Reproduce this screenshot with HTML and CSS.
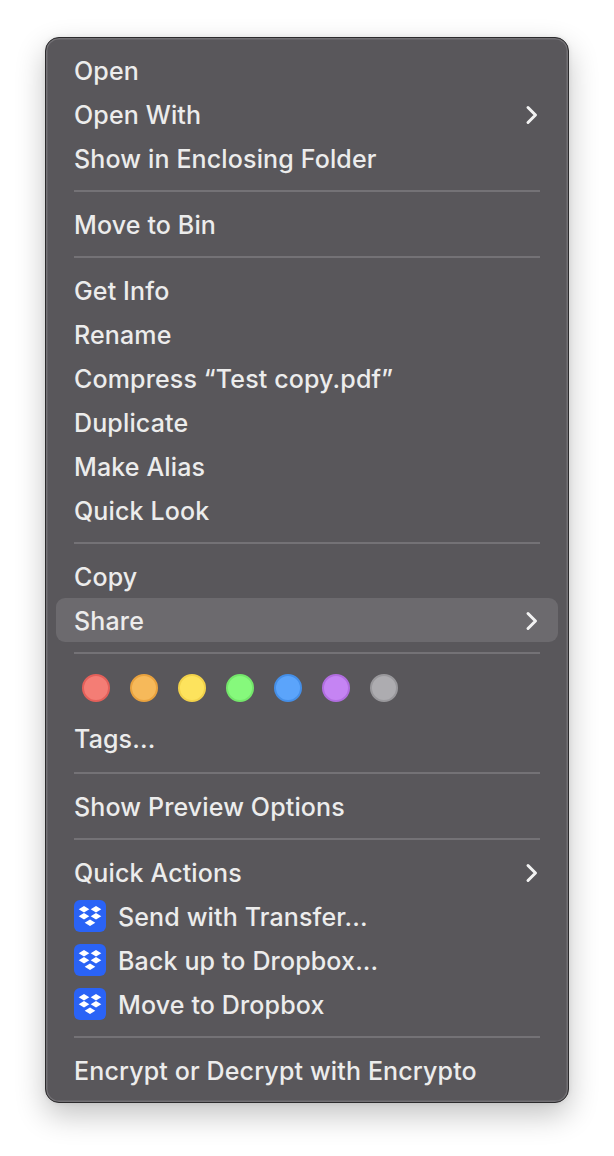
FILE: index.html
```html
<!DOCTYPE html>
<html lang="en">
<head>
<meta charset="utf-8">
<title>Context menu</title>
<link rel="stylesheet" href="styles.css">
</head>
<body>
<svg class="defs" width="0" height="0" aria-hidden="true">
  <symbol id="chev" viewBox="0 0 14 20"><path d="M3 2.5 L10.5 10 L3 17.5" fill="none" stroke="currentColor" stroke-width="3" stroke-linecap="round" stroke-linejoin="round"/></symbol>
  <symbol id="dbx" viewBox="0 0 32 32"><rect width="32" height="32" rx="6" fill="#2a63f6"/><path fill="#fff" d="M4.700 9.300 10 6l5.300 3.300L10 12.600zM16.700 9.300 22 6l5.300 3.300L22 12.600zM4.700 16.300 10 13l5.300 3.300L10 19.600zM16.700 16.300 22 13l5.300 3.300L22 19.600zM10.700 22.800 16 19.500l5.300 3.300L16 26.100z"/></symbol>
</svg>
<div class="menu">
  <div class="row">Open</div>
  <div class="row sub">Open With<svg class="chev"><use href="#chev"/></svg></div>
  <div class="row">Show in Enclosing Folder</div>
  <div class="sep"></div>
  <div class="row">Move to Bin</div>
  <div class="sep"></div>
  <div class="row">Get Info</div>
  <div class="row">Rename</div>
  <div class="row">Compress “Test copy.pdf”</div>
  <div class="row">Duplicate</div>
  <div class="row">Make Alias</div>
  <div class="row">Quick Look</div>
  <div class="sep"></div>
  <div class="row">Copy</div>
  <div class="row sub active">Share<svg class="chev"><use href="#chev"/></svg></div>
  <div class="sep"></div>
  <div class="tags">
    <span class="dot red"></span>
    <span class="dot orange"></span>
    <span class="dot yellow"></span>
    <span class="dot green"></span>
    <span class="dot blue"></span>
    <span class="dot purple"></span>
    <span class="dot grey"></span>
  </div>
  <div class="row tags-label">Tags...</div>
  <div class="sep"></div>
  <div class="row">Show Preview Options</div>
  <div class="sep"></div>
  <div class="row sub">Quick Actions<svg class="chev"><use href="#chev"/></svg></div>
  <div class="row"><svg class="dbx"><use href="#dbx"/></svg>Send with Transfer...</div>
  <div class="row"><svg class="dbx"><use href="#dbx"/></svg>Back up to Dropbox...</div>
  <div class="row"><svg class="dbx"><use href="#dbx"/></svg>Move to Dropbox</div>
  <div class="sep"></div>
  <div class="row">Encrypt or Decrypt with Encrypto</div>
</div>
</body>
</html>
```
FILE: styles.css
```css
html, body {
  margin: 0;
  background: #ffffff;
}
body {
  width: 614px;
  height: 1156px;
  overflow: hidden;
  padding: 37px 0 0 45px;
  box-sizing: border-box;
}
.defs {
  position: absolute;
}
.menu {
  box-sizing: border-box;
  display: flex;
  flex-direction: column;
  width: 524px;
  height: 1066px;
  padding: 11px 10px 10px;
  border: 1px solid #2c2b2d;
  border-radius: 14px;
  background: #59575b;
  box-shadow: inset 0 0 0 1.500px #737175, 0 12px 30px rgba(0, 0, 0, 0.24), 0 0 5px rgba(0, 0, 0, 0.08);
  color: #ececec;
  font-family: Inter, "Liberation Sans", sans-serif;
  font-size: 25px;
  font-weight: 450;
  letter-spacing: 0.14px;
}
.row {
  box-sizing: border-box;
  display: flex;
  flex: none;
  align-items: center;
  height: 44px;
  padding: 0 18px;
  border-radius: 9px;
  white-space: nowrap;
}
.sub {
  justify-content: space-between;
}
.active {
  margin: -1px 0 1px;
  padding-top: 2px;
  background: #6c6a6e;
}
.chev {
  width: 14px;
  height: 20px;
  margin-right: 1px;
  color: #f2f2f2;
}
.sep {
  flex: none;
  height: 2px;
  margin: 9px 18px 11px;
  background: #747276;
}
.tags {
  display: flex;
  flex: none;
  gap: 20px;
  height: 52px;
  box-sizing: border-box;
  padding: 9px 26px 15px;
}
.tags-label {
  margin-bottom: 2px;
}
.dot {
  box-sizing: border-box;
  width: 28px;
  height: 28px;
  border-radius: 50%;
  border: 2px solid;
}
.red { background: #f47d75; border-color: #e4605a; }
.orange { background: #f6b95a; border-color: #e9a23e; }
.yellow { background: #fde35d; border-color: #f2d24a; }
.green { background: #86f97c; border-color: #74e76b; }
.blue { background: #5ba4fb; border-color: #458fe8; }
.purple { background: #c584f3; border-color: #b16ee0; }
.grey { background: #adacb0; border-color: #99989c; }
.dbx {
  flex: none;
  width: 32px;
  height: 32px;
  margin-right: 12px;
  margin-bottom: 2px;
}
```
